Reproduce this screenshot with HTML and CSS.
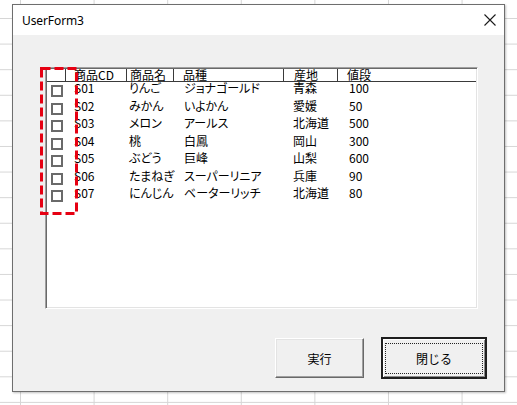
FILE: index.html
```html
<!DOCTYPE html>
<html lang="ja">
<head>
<meta charset="utf-8">
<title>UserForm3</title>
<link rel="stylesheet" href="styles.css">
</head>
<body>
<div class="window">
  <div class="titlebar">
    <span class="title">UserForm3</span>
    <svg class="close" width="12" height="12" viewBox="0 0 12 12"><path d="M0.5 0.5 L11.5 11.5 M11.5 0.5 L0.5 11.5" stroke="#1a1a1a" stroke-width="1.1" fill="none"/></svg>
  </div>
  <div class="content">
    <div class="listbox">
      <div class="lb-header">
        <div class="h h0"></div>
        <div class="h h1">商品CD</div>
        <div class="h h2">商品名</div>
        <div class="h h3">品種</div>
        <div class="h h4">産地</div>
        <div class="h h5">値段</div>
      </div>
      <div class="lb-row"><span class="chk"><span class="box"></span></span><span>S01</span><span>りんご</span><span>ジョナゴールド</span><span>青森</span><span>100</span></div>
      <div class="lb-row"><span class="chk"><span class="box"></span></span><span>S02</span><span>みかん</span><span>いよかん</span><span>愛媛</span><span>50</span></div>
      <div class="lb-row"><span class="chk"><span class="box"></span></span><span>S03</span><span>メロン</span><span>アールス</span><span>北海道</span><span>500</span></div>
      <div class="lb-row"><span class="chk"><span class="box"></span></span><span>S04</span><span>桃</span><span>白鳳</span><span>岡山</span><span>300</span></div>
      <div class="lb-row"><span class="chk"><span class="box"></span></span><span>S05</span><span>ぶどう</span><span>巨峰</span><span>山梨</span><span>600</span></div>
      <div class="lb-row"><span class="chk"><span class="box"></span></span><span>S06</span><span>たまねぎ</span><span>スーパーリニア</span><span>兵庫</span><span>90</span></div>
      <div class="lb-row"><span class="chk"><span class="box"></span></span><span>S07</span><span>にんじん</span><span>ベーターリッチ</span><span>北海道</span><span>80</span></div>
      <svg class="highlight" width="38" height="148" viewBox="0 0 38 148"><rect x="1.5" y="1.5" width="35" height="145" fill="none" stroke="#e60012" stroke-width="3" stroke-dasharray="9 4"/></svg>
    </div>
    <div class="buttons">
      <button class="btn run">実行</button>
      <button class="btn default"><span class="focus"></span>閉じる</button>
    </div>
  </div>
</div>
</body>
</html>
```

FILE: styles.css
```css
html, body {
  margin: 0;
}
body {
  width: 517px;
  height: 405px;
  overflow: hidden;
  box-sizing: border-box;
  padding: 4px 0 0 12px;
  background-color: #ffffff;
  background-image:
    linear-gradient(to right, #d6d6d6 1px, transparent 1px),
    linear-gradient(to bottom, #d6d6d6 1px, transparent 1px);
  background-size: 73.6px 100%, 100% 25.6px;
  background-position: 20px 0, 0 18px;
  font-family: "Noto Sans CJK JP", "Noto Sans", sans-serif;
}
.window {
  width: 493px;
  height: 388px;
  box-sizing: border-box;
  border: 1px solid #6e6e6e;
  background: #f0f0f0;
  box-shadow: 1px 1px 2px rgba(0, 0, 0, 0.25);
  display: flex;
  flex-direction: column;
}
.titlebar {
  height: 30px;
  flex: none;
  background: #ffffff;
  display: flex;
  align-items: center;
  justify-content: space-between;
  padding: 0 8px 0 9px;
}
.title {
  font-family: "Noto Sans", sans-serif;
  font-size: 12px;
  color: #000;
  letter-spacing: -0.1px;
}
.close {
  display: block;
  margin-top: -1px;
}
.content {
  flex: 1;
  display: flex;
  flex-direction: column;
  padding: 32px 0 0 32px;
}
.listbox {
  position: relative;
  width: 433px;
  height: 242px;
  box-sizing: border-box;
  background: #ffffff;
  border: 1px solid;
  border-color: #a0a0a0 #ffffff #ffffff #a0a0a0;
  box-shadow: inset 1px 1px 0 #696969, inset -1px -1px 0 #e3e3e3;
  padding: 1px;
  font-size: 12px;
  color: #000;
  font-feature-settings: "palt";
}
.lb-header {
  display: flex;
  height: 12px;
  border-bottom: 1px solid #3a3a3a;
  line-height: 12px;
}
.h {
  box-sizing: border-box;
  height: 12px;
  border-right: 1px solid #3a3a3a;
  white-space: nowrap;
}
.h0 { width: 19px; }
.h1 { width: 61px; padding-left: 8px; }
.h2 { width: 47px; padding-left: 3px; }
.h3 { width: 110px; padding-left: 9px; }
.h4 { width: 54px; padding-left: 10px; }
.h5 { flex: 1; border-right: none; padding-left: 9px; }
.lb-row {
  display: grid;
  grid-template-columns: 27px 55px 55px 109px 56px 1fr;
  height: 17.5px;
  line-height: 12px;
  align-items: start;
  box-sizing: border-box;
  white-space: nowrap;
}
.lb-row .chk {
  padding: 3px 0 0 4px;
}
.box {
  display: block;
  width: 12px;
  height: 12px;
  box-sizing: border-box;
  border: 2px solid #6a6a6a;
  background: #fff;
}
.highlight {
  position: absolute;
  left: -6px;
  top: -1px;
}
.buttons {
  display: flex;
  justify-content: flex-end;
  align-items: center;
  gap: 17px;
  margin-top: 28px;
  padding-right: 17px;
  height: 42px;
}
.btn {
  position: relative;
  font-family: "Noto Sans CJK JP", sans-serif;
  font-size: 12px;
  color: #000;
  background: #f0f0f0;
  box-sizing: border-box;
  margin: 0;
  padding: 0;
}
.run {
  width: 89px;
  height: 40px;
  border: 1px solid;
  border-color: #ffffff #696969 #696969 #ffffff;
  box-shadow: inset -1px -1px 0 #a0a0a0, inset 1px 1px 0 #e3e3e3;
}
.default {
  width: 106px;
  height: 42px;
  border: 2px solid #1e1e1e;
  box-shadow: inset 1px 1px 0 #ffffff, inset -1px -1px 0 #8a8a8a;
}
.focus {
  position: absolute;
  left: 2px;
  right: 2px;
  top: 4px;
  bottom: 3px;
  border: 1px dotted #222;
}
```
